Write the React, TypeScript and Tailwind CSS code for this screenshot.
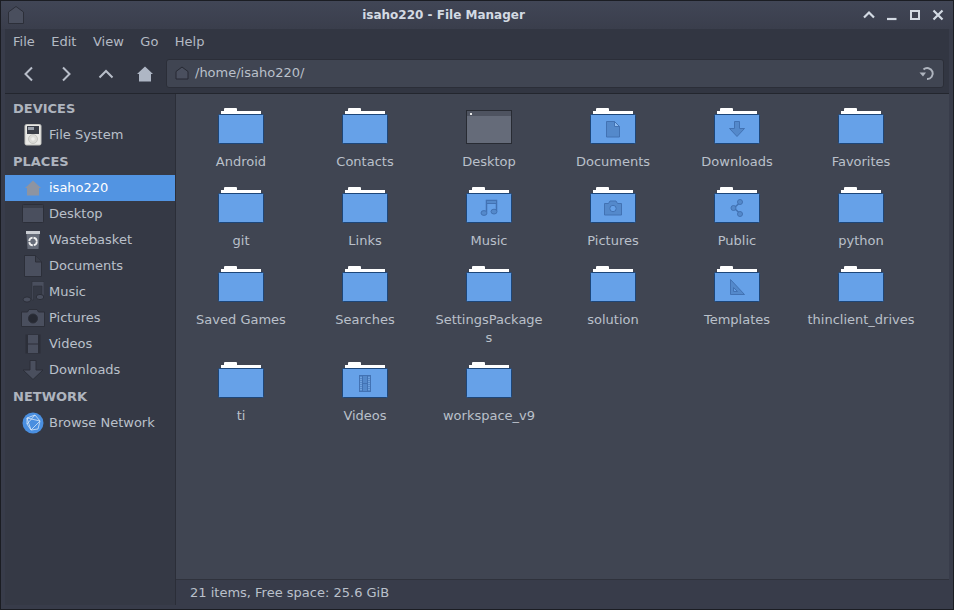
import type { ReactNode } from 'react';

const emblem = '#5489cb';
const emblemLine = '#4272b3';

function Folder({ children }: { children?: ReactNode }) {
    return (
        <svg width="46" height="38" viewBox="0 0 46 38" className="block shrink-0">
            <rect x="6" y="1" width="13" height="4" rx="1" fill="#fff" />
            <rect x="3" y="4" width="40" height="4" fill="#fff" />
            <rect x="0.5" y="7.5" width="45" height="29" rx="1" fill="#66a1e8" stroke="#1d4679" />
            {children}
        </svg>
    );
}

function DesktopTile() {
    return (
        <svg width="46" height="38" viewBox="0 0 46 38" className="block shrink-0">
            <rect x="0.5" y="3.5" width="45" height="33" fill="#656b79" stroke="#282b33" />
            <rect x="1" y="4" width="44" height="5" fill="#4e5360" />
            <rect x="4" y="6" width="2" height="2" fill="#e8e8e8" />
        </svg>
    );
}

const emblems: Record<string, ReactNode> = {
    Documents: (
        <g stroke={emblemLine}>
            <path d="M16.500 14.500h8l5 5v10.500h-13z" fill={emblem} />
            <path d="M24.500 14.500v5h5z" fill="#8fbcf0" />
        </g>
    ),
    Downloads: <path d="M20.500 14.500h5v7h5l-7.500 8-7.500-8h5z" fill={emblem} stroke={emblemLine} />,
    Music: (
        <g fill={emblem} stroke={emblemLine}>
            <path d="M20.500 26V14.500h10V25" fill="none" strokeWidth="1.500" />
            <rect x="20.500" y="14.500" width="10" height="3" />
            <ellipse cx="18" cy="27" rx="3" ry="2.400" />
            <ellipse cx="28" cy="25.600" rx="3" ry="2.400" />
        </g>
    ),
    Pictures: (
        <g>
            <path d="M14.500 17.500h4l1.500-2.500h6l1.500 2.500h4v11.500h-17z" fill={emblem} stroke={emblemLine} />
            <circle cx="23" cy="22.500" r="3.200" fill="#66a1e8" stroke={emblemLine} />
        </g>
    ),
    Public: (
        <g fill={emblem} stroke={emblemLine}>
            <path d="M26 16.500l-6 5.500 6 5.500" fill="none" strokeWidth="1.500" />
            <circle cx="26" cy="16" r="2.500" />
            <circle cx="19.500" cy="22" r="2.500" />
            <circle cx="26" cy="28" r="2.500" />
        </g>
    ),
    Templates: (
        <g fill={emblem} stroke={emblemLine}>
            <path d="M16.500 14.500l14 15h-14zM19.500 22.500v4h4z" fillRule="evenodd" />
        </g>
    ),
    Videos: (
        <g>
            <rect x="17.500" y="14.500" width="11" height="16" fill={emblem} stroke={emblemLine} />
            <path d="M20.500 15v15M25.500 15v15M20.500 22.500h5" stroke={emblemLine} />
            <path d="M19 16v13M27 16v13" stroke="#8fbcf0" strokeDasharray="1 1" />
        </g>
    ),
};

const files = [
    'Android', 'Contacts', 'Desktop', 'Documents', 'Downloads', 'Favorites',
    'git', 'Links', 'Music', 'Pictures', 'Public', 'python',
    'Saved Games', 'Searches', 'SettingsPackages', 'solution', 'Templates', 'thinclient_drives',
    'ti', 'Videos', 'workspace_v9',
];

const placeFill = '#4a4f5e';
const placeLine = '#2c2f39';

function HomeGlyph({ fill, line }: { fill: string; line?: string }) {
    return (
        <svg width="18" height="18" viewBox="0 0 18 18">
            <path d="M9 1.500 17 9h-2v7.500H3V9H1z" fill={fill} stroke={line} />
        </svg>
    );
}

function SideIcon({ name }: { name: string }) {
    if (name === 'File System') {
        return (
            <svg width="18" height="22" viewBox="0 0 18 22">
                <rect x="1" y="0.500" width="16" height="20.500" rx="1.500" fill="#e9e9e6" stroke="#c4c4c0" />
                <rect x="3" y="2" width="12" height="8" fill="#3a3e48" />
                <rect x="4" y="3" width="6" height="3" fill="#9aa0aa" />
                <circle cx="9" cy="15" r="4.500" fill="#dcdcd8" stroke="#c6c6c2" />
                <circle cx="9" cy="15" r="1.800" fill="#efefec" />
            </svg>
        );
    }
    if (name === 'isaho220') return <HomeGlyph fill="#8e94a1" />;
    if (name === 'Desktop') {
        return (
            <svg width="22" height="20" viewBox="0 0 22 20">
                <rect x="0.500" y="0.500" width="21" height="18" rx="1" fill={placeFill} stroke={placeLine} />
                <rect x="1" y="1" width="20" height="3" fill="#3a3e4a" />
            </svg>
        );
    }
    if (name === 'Wastebasket') {
        return (
            <svg width="18" height="20" viewBox="0 0 18 20">
                <path d="M2 1h14v3H2z" fill="#c9ccd2" />
                <path d="M2.500 4h13l-1 15h-11z" fill="#666c79" />
                <circle cx="9" cy="11.500" r="3.800" fill="none" stroke="#f2f2f2" strokeWidth="1.800" strokeDasharray="5 1" />
            </svg>
        );
    }
    if (name === 'Documents') {
        return (
            <svg width="18" height="22" viewBox="0 0 18 22">
                <path d="M0.500 0.500h11l6 6.500v14.500H0.500z" fill={placeFill} stroke={placeLine} />
                <path d="M11.500 0.500v6.500h6" fill="#3a3e4a" stroke={placeLine} />
            </svg>
        );
    }
    if (name === 'Music') {
        return (
            <svg width="22" height="22" viewBox="0 0 22 22">
                <path d="M10 0.500h12V15h-2V5H11.500v14h-1.500z" fill={placeFill} stroke={placeLine} strokeWidth="0.600" />
                <ellipse cx="5" cy="18.500" rx="3.800" ry="2.600" fill={placeFill} stroke={placeLine} />
                <ellipse cx="18" cy="16" rx="3.800" ry="2.600" fill={placeFill} stroke={placeLine} />
            </svg>
        );
    }
    if (name === 'Pictures') {
        return (
            <svg width="24" height="18" viewBox="0 0 24 18">
                <path d="M0.500 3h6L8 0.500h8L17.500 3h6v14.500H0.500z" fill={placeFill} stroke={placeLine} />
                <circle cx="12" cy="9.500" r="4.500" fill="#262932" stroke="#2c2f39" />
            </svg>
        );
    }
    if (name === 'Videos') {
        return (
            <svg width="16" height="20" viewBox="0 0 16 20">
                <rect x="0.500" y="0.500" width="15" height="19" fill="#2c2f39" />
                <rect x="3" y="1" width="10" height="8.500" fill={placeFill} />
                <rect x="3" y="10.500" width="10" height="8.500" fill={placeFill} />
            </svg>
        );
    }
    if (name === 'Downloads') {
        return (
            <svg width="22" height="20" viewBox="0 0 22 20">
                <path d="M8 0.500h6V10h7L11 19.500 1 10h7z" fill={placeFill} stroke={placeLine} />
            </svg>
        );
    }
    return (
        <svg width="22" height="22" viewBox="0 0 22 22">
            <circle cx="11" cy="11" r="10.500" fill="#4a8fe0" />
            <path d="M5 6l8-3 5 6-2 8-7 1-4-6zM5 6l4 12M5 6l13 3M13 3l-8 9M9 18l9-9" fill="none" stroke="#d6e6f8" strokeWidth="0.800" />
        </svg>
    );
}

function Heading({ text }: { text: string }) {
    return <div className="h-[27px] pl-[8px] flex items-center font-bold text-[13px] text-[#aeb4be]">{text}</div>;
}

function Place({ name, active }: { name: string; active?: boolean }) {
    return (
        <div className={`h-[26px] flex items-center ${active ? 'bg-[#5294e2] text-white' : 'text-[#bac0ca]'}`}>
            <div className="w-[44px] pl-[14px] pr-[2px] flex items-center justify-center">
                <SideIcon name={name} />
            </div>
            <span className="text-[13px]">{name}</span>
        </div>
    );
}

export default function App() {
    return (
        <div className="w-[954px] h-[610px] flex flex-col bg-[#383c4a] border border-[#1b1d23] font-['DejaVu_Sans',sans-serif] text-[13px] overflow-hidden">
            <div className="h-[28px] shrink-0 flex items-center bg-linear-to-b from-[#414656] to-[#3a3e4c] px-[5px]">
                <svg width="18" height="20" viewBox="0 0 18 20" className="ml-[1px] shrink-0">
                    <path d="M9 1.500 16.500 7v11.500h-15V7z" fill="#4a4f5e" stroke="#2c2f39" />
                </svg>
                <div className="flex-1 text-center font-bold text-[12px] text-[#d3dae3]">isaho220 - File Manager</div>
                <div className="flex items-center gap-[9px] pr-[3px]">
                    <svg width="14" height="14" viewBox="0 0 14 14"><path d="M2 9.500 7 4.500l5 5" fill="none" stroke="#d3dae3" strokeWidth="2.200" /></svg>
                    <svg width="14" height="14" viewBox="0 0 14 14"><path d="M2 11h9.500" fill="none" stroke="#d3dae3" strokeWidth="2.200" /></svg>
                    <svg width="14" height="14" viewBox="0 0 14 14"><rect x="3" y="3" width="8" height="8" fill="none" stroke="#d3dae3" strokeWidth="2" /></svg>
                    <svg width="14" height="14" viewBox="0 0 14 14"><path d="M2.500 2.500l9 9M11.500 2.500l-9 9" fill="none" stroke="#d3dae3" strokeWidth="2.200" /></svg>
                </div>
            </div>

            <div className="flex-1 min-h-0 flex flex-col mx-[4px] mb-[4px] bg-[#323642]">
                <div className="h-[26px] shrink-0 flex items-center pl-[8px] gap-[16.500px] text-[#b4bac4]">
                    <span>File</span>
                    <span>Edit</span>
                    <span>View</span>
                    <span>Go</span>
                    <span>Help</span>
                </div>

                <div className="h-[39px] shrink-0 flex items-center border-b border-[#23262e] pb-[1px] pl-[14px] pr-[5px]">
                    <svg width="20" height="20" viewBox="0 0 20 20"><path d="M13 3.500 6.500 10l6.500 6.500" fill="none" stroke="#b8bec9" strokeWidth="2" /></svg>
                    <svg width="20" height="20" viewBox="0 0 20 20" className="ml-[17px]"><path d="M7 3.500 13.500 10 7 16.500" fill="none" stroke="#b8bec9" strokeWidth="2" /></svg>
                    <svg width="20" height="20" viewBox="0 0 20 20" className="ml-[20px]"><path d="M3.500 13.500 10 7l6.500 6.500" fill="none" stroke="#b8bec9" strokeWidth="2" /></svg>
                    <div className="ml-[20px]"><HomeGlyph fill="#aeb6c4" /></div>
                    <div className="ml-[12px] flex-1 h-[29px] flex items-center bg-[#404552] border border-[#2b2e38] rounded-[3px] pb-[1px] pl-[8px] pr-[7px] text-[#bac0ca]">
                        <svg width="14" height="14" viewBox="0 0 14 14" className="shrink-0"><path d="M7 1 13 5.500V13H1V5.500z" fill="#4a4f5e" stroke="#262932" /></svg>
                        <span className="flex-1 ml-[6px]">/home/isaho220/</span>
                        <svg width="18" height="18" viewBox="0 0 18 18">
                            <path d="M5.500 5.500A5.500 5.500 0 1 1 9 15" fill="none" stroke="#aeb4be" strokeWidth="2" />
                            <path d="M1.500 8.500h6.500L5 12.500z" fill="#aeb4be" />
                        </svg>
                    </div>
                </div>

                <div className="flex-1 min-h-0 flex">
                    <div className="w-[170px] shrink-0 bg-[#353945] border-r border-[#2b2e38] pt-[1px] box-content">
                        <Heading text="DEVICES" />
                        <Place name="File System" />
                        <Heading text="PLACES" />
                        <Place name="isaho220" active />
                        <Place name="Desktop" />
                        <Place name="Wastebasket" />
                        <Place name="Documents" />
                        <Place name="Music" />
                        <Place name="Pictures" />
                        <Place name="Videos" />
                        <Place name="Downloads" />
                        <Heading text="NETWORK" />
                        <Place name="Browse Network" />
                    </div>

                    <div className="flex-1 min-w-0 flex flex-col">
                        <div className="flex-1 min-h-0 bg-[#404552] pl-[3px] pt-[13px] grid grid-cols-[repeat(6,124px)] grid-rows-[64px_64px_81px_64px] content-start gap-y-[15px]">
                            {files.map((name) => (
                                <div key={name} className="flex flex-col items-center">
                                    {name === 'Desktop' ? <DesktopTile /> : <Folder>{emblems[name]}</Folder>}
                                    <div className="mt-[8px] w-[110px] text-center leading-[18px] text-[#bac0ca] [overflow-wrap:anywhere]">{name}</div>
                                </div>
                            ))}
                        </div>
                        <div className="h-[26px] shrink-0 bg-[#383c4a] border-t border-[#2f323c] flex items-center pl-[14px] text-[#bac0ca]">
                            21 items, Free space: 25.6 GiB
                        </div>
                    </div>
                </div>
            </div>
        </div>
    );
}
